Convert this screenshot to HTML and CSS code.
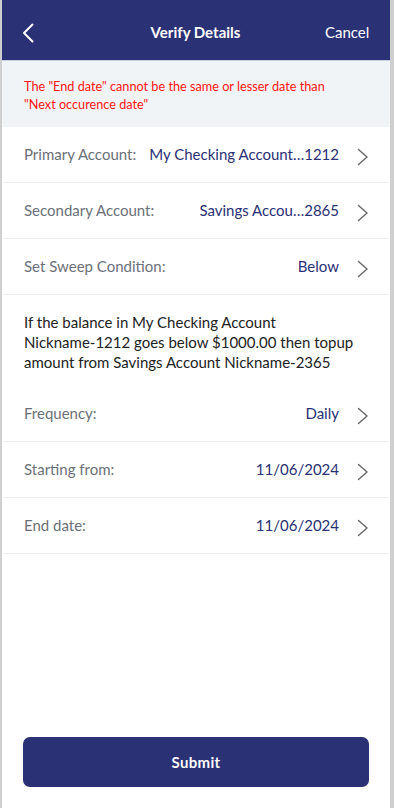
FILE: index.html
```html
<!DOCTYPE html>
<html>
<head>
<meta charset="utf-8">
<link rel="stylesheet" href="styles.css">
</head>
<body>
<div class="screen">
  <header class="topbar">
    <span class="back">
      <svg width="12" height="20" viewBox="0 0 12 20"><path d="M10.5 1.5 L2 10 L10.5 18.5" fill="none" stroke="#fff" stroke-width="2" stroke-linecap="round" stroke-linejoin="round"/></svg>
    </span>
    <h1 class="title">Verify Details</h1>
    <span class="cancel">Cancel</span>
  </header>
  <div class="error">The "End date" cannot be the same or lesser date than "Next occurence date"</div>
  <div class="row"><span class="label">Primary Account:</span><span class="value">My Checking Account…1212</span><span class="chev"><svg width="12" height="18" viewBox="0 0 12 18"><path d="M1.5 1.5 L10 9 L1.5 16.5" fill="none" stroke="#6b6b6b" stroke-width="1.5" stroke-linecap="round" stroke-linejoin="round"/></svg></span></div>
  <div class="row"><span class="label">Secondary Account:</span><span class="value">Savings Accou…2865</span><span class="chev"><svg width="12" height="18" viewBox="0 0 12 18"><path d="M1.5 1.5 L10 9 L1.5 16.5" fill="none" stroke="#6b6b6b" stroke-width="1.5" stroke-linecap="round" stroke-linejoin="round"/></svg></span></div>
  <div class="row"><span class="label">Set Sweep Condition:</span><span class="value">Below</span><span class="chev"><svg width="12" height="18" viewBox="0 0 12 18"><path d="M1.5 1.5 L10 9 L1.5 16.5" fill="none" stroke="#6b6b6b" stroke-width="1.5" stroke-linecap="round" stroke-linejoin="round"/></svg></span></div>
  <p class="desc">If the balance in My Checking Account Nickname&#8209;1212 goes below $1000.00 then topup amount from Savings Account Nickname-2365</p>
  <div class="row"><span class="label">Frequency:</span><span class="value">Daily</span><span class="chev"><svg width="12" height="18" viewBox="0 0 12 18"><path d="M1.5 1.5 L10 9 L1.5 16.5" fill="none" stroke="#6b6b6b" stroke-width="1.5" stroke-linecap="round" stroke-linejoin="round"/></svg></span></div>
  <div class="row"><span class="label">Starting from:</span><span class="value">11/06/2024</span><span class="chev"><svg width="12" height="18" viewBox="0 0 12 18"><path d="M1.5 1.5 L10 9 L1.5 16.5" fill="none" stroke="#6b6b6b" stroke-width="1.5" stroke-linecap="round" stroke-linejoin="round"/></svg></span></div>
  <div class="row"><span class="label">End date:</span><span class="value">11/06/2024</span><span class="chev"><svg width="12" height="18" viewBox="0 0 12 18"><path d="M1.5 1.5 L10 9 L1.5 16.5" fill="none" stroke="#6b6b6b" stroke-width="1.5" stroke-linecap="round" stroke-linejoin="round"/></svg></span></div>
  <div class="spacer"></div>
  <div class="footer"><button class="submit">Submit</button></div>
</div>
</body>
</html>
```

FILE: styles.css
```css
html, body {
  margin: 0;
  padding: 0;
  background: #cfcfcf;
}
body {
  font-family: Lato, "Noto Sans", sans-serif;
}
.screen {
  margin-left: 2px;
  width: 388px;
  height: 808px;
  background: #fff;
  display: flex;
  flex-direction: column;
}
.topbar {
  height: 61px;
  flex: none;
  background: #2a3175;
  display: flex;
  align-items: center;
  padding: 3px 21px 0 20px;
  border-bottom: 1px solid #c9cde0;
  box-sizing: border-box;
  color: #fff;
}
.back {
  width: 40px;
  display: flex;
  align-items: center;
  margin-top: 2px;
}
.title {
  flex: 1;
  margin: 0;
  text-align: center;
  font-size: 15px;
  font-weight: 700;
  padding-left: 4px;
}
.cancel {
  width: 44px;
  text-align: right;
  font-size: 15px;
}
.error {
  flex: none;
  background: #f1f4f7;
  color: #ff1414;
  font-size: 12.7px;
  line-height: 18px;
  padding: 16px 40px 14px 22px;
  height: 66px;
  box-sizing: border-box;
}
.row {
  height: 56px;
  flex: none;
  box-sizing: border-box;
  border-bottom: 1px solid #eaecf0;
  display: flex;
  align-items: center;
  padding: 0 21px 0 22px;
  font-size: 15px;
}
.label {
  color: #6b7078;
  flex: 1;
  margin-top: -1px;
}
.value {
  color: #2a3175;
  margin-top: -1px;
}
.chev {
  width: 30px;
  display: flex;
  justify-content: flex-end;
  padding-top: 4px;
}
.desc {
  flex: none;
  margin: 0;
  padding: 17px 30px 14px 22px;
  font-size: 15px;
  line-height: 20px;
  color: #222;
}
.spacer {
  flex: 1;
}
.footer {
  padding: 0 21px 21px 21px;
}
.submit {
  width: 100%;
  height: 50px;
  border: none;
  border-radius: 7px;
  background: #2a3175;
  color: #fff;
  font-family: Lato, "Noto Sans", sans-serif;
  font-size: 15px;
  font-weight: 700;
  letter-spacing: 0.3px;
}
```
